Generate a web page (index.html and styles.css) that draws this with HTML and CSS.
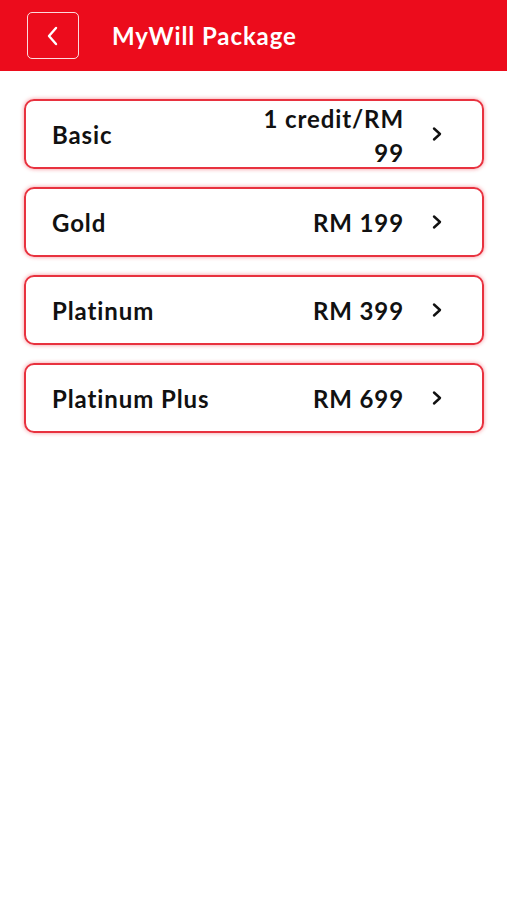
FILE: index.html
```html
<!DOCTYPE html>
<html lang="en">
<head>
  <meta charset="UTF-8">
  <meta name="viewport" content="width=device-width, initial-scale=1.0">
  <title>MyWill Package</title>
  <link rel="stylesheet" href="styles.css">
</head>
<body>
  <div class="header">
    <button class="back-button" aria-label="Back">
      <svg width="16" height="22" viewBox="0 0 16 22"><path d="M11 3 L4 11 L11 19" fill="none" stroke="#fff" stroke-width="2.4" stroke-linecap="round" stroke-linejoin="round"/></svg>
    </button>
    <h1>MyWill Package</h1>
  </div>
  <div class="content">
    <div class="package">
      <span class="name">Basic</span>
      <span class="price narrow">1 credit/RM 99</span>
      <span class="chevron"><svg width="12" height="16" viewBox="0 0 12 16"><path d="M3 2.5 L9 8 L3 13.5" fill="none" stroke="#111" stroke-width="2.4" stroke-linecap="round" stroke-linejoin="round"/></svg></span>
    </div>
    <div class="package">
      <span class="name">Gold</span>
      <span class="price">RM 199</span>
      <span class="chevron"><svg width="12" height="16" viewBox="0 0 12 16"><path d="M3 2.5 L9 8 L3 13.5" fill="none" stroke="#111" stroke-width="2.4" stroke-linecap="round" stroke-linejoin="round"/></svg></span>
    </div>
    <div class="package">
      <span class="name">Platinum</span>
      <span class="price">RM 399</span>
      <span class="chevron"><svg width="12" height="16" viewBox="0 0 12 16"><path d="M3 2.5 L9 8 L3 13.5" fill="none" stroke="#111" stroke-width="2.4" stroke-linecap="round" stroke-linejoin="round"/></svg></span>
    </div>
    <div class="package">
      <span class="name">Platinum Plus</span>
      <span class="price">RM 699</span>
      <span class="chevron"><svg width="12" height="16" viewBox="0 0 12 16"><path d="M3 2.5 L9 8 L3 13.5" fill="none" stroke="#111" stroke-width="2.4" stroke-linecap="round" stroke-linejoin="round"/></svg></span>
    </div>
  </div>
</body>
</html>
```

FILE: styles.css
```css
body, html {
  margin: 0;
  padding: 0;
  font-family: Lato, "Open Sans", sans-serif;
  height: 100%;
  background-color: #ffffff;
}

.header {
  background-color: #ec0c1c;
  color: #FFFFFF;
  height: 71px;
  padding: 0 27px;
  display: flex;
  align-items: center;
  gap: 33px;
  box-sizing: border-box;
}

.header h1 {
  margin: 0;
  font-size: 24px;
  font-weight: 700;
  letter-spacing: 0.9px;
}

.back-button {
  width: 52px;
  height: 47px;
  border: 1.5px solid rgba(255, 255, 255, 0.85);
  border-radius: 5px;
  background: transparent;
  padding: 0;
  display: flex;
  align-items: center;
  justify-content: center;
  cursor: pointer;
}

.content {
  padding: 28px 23px 0 24px;
  display: flex;
  flex-direction: column;
  gap: 18px;
}

.package {
  height: 70px;
  box-sizing: border-box;
  border: 2px solid #e8323f;
  border-radius: 10px;
  box-shadow: 0 0 4px rgba(236, 12, 28, 0.45);
  display: flex;
  align-items: center;
  padding: 0 39px 0 26px;
  color: #111111;
  font-size: 24px;
  font-weight: 700;
  letter-spacing: 0.9px;
}

.package .name {
  flex: 1;
}

.package .price {
  text-align: right;
  line-height: 34px;
  margin-top: 2px;
}

.package .price.narrow {
  width: 150px;
  margin-top: 4px;
}

.package .chevron {
  margin-left: 27px;
  display: flex;
  align-items: center;
}
```
